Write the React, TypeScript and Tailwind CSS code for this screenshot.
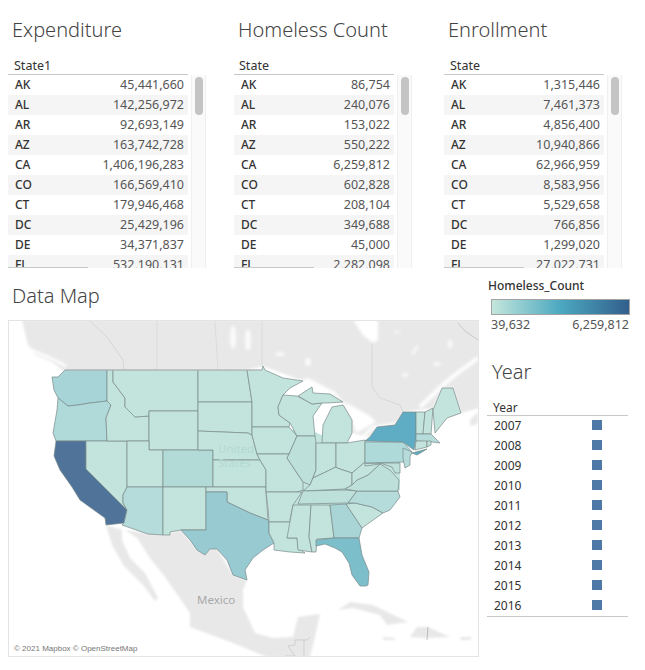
const states = ["AK","AL","AR","AZ","CA","CO","CT","DC","DE","FL"];
const expenditure = ["45,441,660","142,256,972","92,693,149","163,742,728","1,406,196,283","166,569,410","179,946,468","25,429,196","34,371,837","532,190,131"];
const homeless = ["86,754","240,076","153,022","550,222","6,259,812","602,828","208,104","349,688","45,000","2,282,098"];
const enrollment = ["1,315,446","7,461,373","4,856,400","10,940,866","62,966,959","8,583,956","5,529,658","766,856","1,299,020","27,022,731"];
const years = ["2007","2008","2009","2010","2011","2012","2013","2014","2015","2016"];

const L = "#c3e4dc";
const shapes: [string, string][] = [
  ["52,377 58,377 65,370 107,370 107,401 99,402 90,403 78,405 68,406 58,398 54,390", "#a6d4d7"],
  ["58,398 68,406 78,405 90,403 107,401 111,405 106,418 107,441 56,441 53,433 57,410", "#b0d9da"],
  ["56,441 86,441 86,469 127,510 124,523 106,525 105,518 80,500 72,487 60,470 54,456", "#4f7399"],
  ["86,441 127,441 127,487 123,495 123,503 127,510 86,469", L],
  ["107,370 113,370 113,382 125,398 125,407 135,417 149,416 149,441 107,441 106,418 111,405 107,401", L],
  ["113,370 198,370 198,411 149,411 149,416 135,417 125,407 125,398 113,382", L],
  ["149,411 198,411 198,431 198,450 149,450", L],
  ["127,441 149,441 149,450 163,450 163,487 127,487", L],
  ["163,450 213,450 213,487 163,487", "#b2dbd8"],
  ["127,487 163,487 163,535 148,534 122,525 124,523 127,510 123,503 123,495", "#b5dcda"],
  ["163,487 206,487 206,530 181,530 170,532 170,535 163,535", L],
  ["198,370 247,370 252,402 198,402", L],
  ["198,402 252,402 252,427 252,435 248,433 198,431", L],
  ["198,431 248,433 252,435 257,454 260,460 213,460 213,450 198,450", L],
  ["213,460 260,460 266,470 266,487 213,487", L],
  ["206,487 266,487 266,492 268,520 250,513 227,502 227,492 206,492", L],
  ["206,492 227,492 227,502 250,513 268,520 269,522 269,533 274,543 263,550 253,558 245,570 247,580 233,575 227,560 217,549 210,549 205,555 197,550 190,540 181,530 206,530", "#97cad1"],
  ["247,370 262,370 263,366 265,370 283,378 303,381 290,388 283,395 278,407 279,415 290,423 289,427 252,427 252,402", L],
  ["252,427 289,427 297,436 289,454 257,454 252,435", L],
  ["257,454 289,454 287,458 303,482 303,490 297,492 266,492 266,470 260,460", L],
  ["266,492 302,492 293,505 290,520 291,522 269,522 268,508", L],
  ["269,522 291,522 291,532 287,538 297,538 298,548 305,553 290,552 274,550 274,543 269,533", L],
  ["283,395 297,396 312,404 322,403 313,416 315,436 297,436 290,423 279,415 278,407", L],
  ["298,396 312,387 313,393 330,394 343,402 327,403 322,403 312,404", L],
  ["332,407 343,405 352,420 352,433 347,443 322,443 323,425", L],
  ["297,436 315,436 316,443 316,470 310,485 303,482 287,458 289,454", "#bde0da"],
  ["316,443 336,443 336,467 313,478 316,470", L],
  ["336,443 347,443 365,440 365,462 352,473 337,468 336,467", L],
  ["313,478 336,467 337,468 352,473 352,485 345,489 303,491 310,485", L],
  ["303,491 345,490 357,491 348,503 298,504", "#bde0da"],
  ["293,505 311,505 309,537 312,552 298,550 297,538 287,538", L],
  ["311,505 330,505 334,538 317,539 316,552 312,552 309,537", L],
  ["330,505 346,504 362,528 359,538 334,538", "#a9d5d7"],
  ["346,504 355,503 372,507 383,513 362,528", L],
  ["348,503 357,491 398,491 400,497 390,510 383,513 372,507 355,503", "#b5dcda"],
  ["345,489 352,485 357,480 368,475 380,464 390,470 399,480 398,491 357,491", "#bde0da"],
  ["352,473 365,462 365,466 380,464 368,475 357,480 352,485", L],
  ["365,463 400,463 400,473 395,473 392,467 380,463", "#bde0da"],
  ["365,442 403,442 412,452 405,462 365,463", "#afdada"],
  ["403,448 412,452 410,457 410,465 405,468 403,458", "#b5dcda"],
  ["365,441 370,437 377,427 395,425 403,412 416,412 416,438 414,450 403,442", "#5fadc4"],
  ["412,453 427,449 417,455", "#5fadc4"],
  ["416,412 425,412 423,434 416,434", L],
  ["425,412 433,408 431,434 423,434", L],
  ["433,410 442,388 453,388 461,413 447,418 435,433", L],
  ["416,434 431,434 435,438 440,443 432,442 416,441", "#b5dcda"],
  ["416,441 427,441 427,447 415,450", L],
  ["427,441 431,441 431,445 427,447", L],
  ["316,540 334,538 359,538 362,555 369,572 368,585 366,586 360,586 352,575 349,563 342,552 335,548 325,544 316,546", "#7dbecb"],
];

const land = [
  "22,320 479,320 479,408 461,413 453,388 442,388 433,408 403,412 395,425 377,427 370,437 352,433 343,402 303,381 263,366 247,370 65,372 52,362 36,355 28,345",
  "478,412 470,420 470,426 478,424",
  "125,530 163,535 181,530 197,550 217,549 233,575 247,580 243,590 243,607 255,633 273,638 293,637 298,617 320,614 315,637 310,657 267,657 233,643 190,627 190,613 165,577 150,558 137,538",
  "106,525 122,530 122,540 130,558 145,573 158,598 155,601 143,585 124,566 112,545",
  "338,610 350,602 373,605 408,622 387,625 380,615 353,608",
  "417,627 428,627 450,637 428,638 410,637",
  "382,637 395,638 394,640 384,640",
  "460,637 472,637 470,640 461,640",
];

const lakes: string[] = [
  "283,395 295,384 308,378 335,392 345,404 330,394 313,393 310,387 298,396",
  "313,416 322,405 334,402 330,410 323,425 322,443 316,443 314,425",
  "343,402 352,406 370,416 376,422 356,433 352,420",
  "353,320 378,320 378,340 373,343 363,335",
];

function TableBlock({ title, head, values, w, headPl }: { title: string; head: string; values: string[]; w: string; headPl: string }) {
  return (
    <div className={`shrink-0 ${w}`}>
      <h2 className="ml-[4px] h-6 text-[20px] leading-6 font-light text-[#444444]">{title}</h2>
      <div className="flex gap-[3px]">
        <div className="min-w-0 flex-1">
          <div className={`mt-[14px] h-[19px] border-b border-[#c8c8c8] text-[12.5px] leading-[20px] text-[#333333] ${headPl}`}>{head}</div>
          <div className="relative h-[193px] overflow-hidden">
            {values.map((v, i) => (
              <div key={v} className={`flex h-5 items-center justify-between pl-[7px] pr-[4px] text-[12.5px] leading-5 ${i % 2 === 1 ? "bg-[#f5f5f5]" : "bg-white"}`}>
                <span className="text-[12px] font-medium text-[#333333]">{states[i]}</span>
                <span className="text-[#555555]">{v}</span>
              </div>
            ))}
            <div className="absolute bottom-0 left-0 h-px w-20 bg-[#c8c8c8]" />
          </div>
        </div>
        <div className="mt-[33px] h-[193px] w-[15px] shrink-0 border-x border-[#efefef] bg-[#fafafa] px-[3px] pt-[2px]">
          <div className="h-[38px] w-2 rounded-[4px] bg-[#c4c4c4]" />
        </div>
      </div>
    </div>
  );
}

function MapSvg() {
  return (
    <svg viewBox="8 320 471 337" width="471" height="337" className="block">
      <defs>
        <filter id="soft"><feGaussianBlur stdDeviation="1" /></filter>
        <filter id="softer"><feGaussianBlur stdDeviation="1.6" /></filter>
      </defs>
      <g filter="url(#soft)">
        {land.map((p) => <polygon key={p} points={p} fill="#e8e8e8" />)}
      </g>
      <g fill="none" strokeWidth="0.7">
        <polyline points="90,321 107,337 123,360 124,370" stroke="#cfcfcf" />
        <polyline points="157,321 157,370" stroke="#d6d6d6" />
        <polyline points="215,321 218,370" stroke="#d6d6d6" />
        <polyline points="262,321 262,366" stroke="#d6d6d6" />
        <polyline points="372,343 372,387 380,398 400,405 403,412" stroke="#d0d0d0" />
        <polyline points="458,323 465,331 478,340" stroke="#bcbcbc" />
        <polyline points="285,656 295,656 288,646 295,645 295,640 307,640 310,637" stroke="#c4c4c4" />
        <polyline points="304,656 304,640" stroke="#c4c4c4" />
        <polyline points="428,627 427,640" stroke="#a8a8a8" />
      </g>
      <g filter="url(#softer)" fill="#ffffff">
        {lakes.map((p) => <polygon key={p} points={p} />)}
        <ellipse cx="308" cy="362" rx="3" ry="4" opacity="0.8" />
        <ellipse cx="280" cy="354" rx="5" ry="2" opacity="0.7" />
        <ellipse cx="248" cy="340" rx="3" ry="11" opacity="0.8" />
        <ellipse cx="233" cy="337" rx="3" ry="12" opacity="0.8" />
        <ellipse cx="405" cy="375" rx="3" ry="2" opacity="0.7" />
        <ellipse cx="415" cy="350" rx="1.5" ry="6" opacity="0.7" transform="rotate(30 415 350)" />
        <ellipse cx="397" cy="332" rx="3" ry="1.5" opacity="0.6" />
        <ellipse cx="437" cy="364" rx="4" ry="2" opacity="0.7" />
        <ellipse cx="450" cy="344" rx="2.5" ry="4" opacity="0.7" />
        <polyline points="348,444 362,438 372,428 395,424" fill="none" stroke="#ffffff" strokeWidth="3" />
        <polyline points="420,407 443,385 455,375 478,358" fill="none" stroke="#ffffff" strokeWidth="4" />
        <polyline points="30,350 50,358 66,366" fill="none" stroke="#ffffff" strokeWidth="3" />
      </g>
      <polygon points="262,430 310,430 345,445 400,445 400,490 360,500 300,540 270,520" fill={L} />
      <g strokeLinejoin="round">
        {shapes.map(([p, c]) => <polygon key={p} points={p} fill={c} stroke="#7a8a8a" strokeWidth="0.7" />)}
      </g>
      <polyline points="65,370 262,370" fill="none" stroke="#bdbdbd" strokeWidth="0.7" />
      <g fontFamily="'Noto Sans', sans-serif" fontSize="11.5" fill="#b4d9d0">
        <text x="218" y="453">United</text>
        <text x="218" y="467">States</text>
      </g>
      <text x="197" y="604" fontFamily="'Noto Sans', sans-serif" fontSize="11.5" fill="#a8a8a8">Mexico</text>
    </svg>
  );
}

export default function App() {
  return (
    <div className="h-[670px] w-[645px] overflow-hidden bg-white font-['Noto_Sans',sans-serif]">
      <div className="flex h-[268px] overflow-hidden pl-2 pt-[18px]">
        <TableBlock title="Expenditure" head="State1" headPl="pl-[6px]" values={expenditure} w="w-[198px] mr-[28px]" />
        <TableBlock title="Homeless Count" head="State" headPl="pl-[5px]" values={homeless} w="w-[178px] mr-[32px]" />
        <TableBlock title="Enrollment" head="State" headPl="pl-[6px]" values={enrollment} w="w-[178px]" />
      </div>
      <div className="flex pl-2">
        <div className="w-[471px] shrink-0">
          <h2 className="ml-[4px] mt-[16px] h-6 text-[20px] leading-6 font-light text-[#444444]">Data Map</h2>
          <div className="relative mt-3 h-[337px] w-[471px] outline outline-1 -outline-offset-1 outline-[#e4e4e4]">
            <MapSvg />
            <div className="absolute bottom-[3px] left-[3px] bg-white/70 px-[3px] font-['Liberation_Sans',sans-serif] text-[8px] leading-[11px] text-[#777777]">© 2021 Mapbox © OpenStreetMap</div>
          </div>
        </div>
        <div className="ml-2 w-[143px] shrink-0">
          <div className="ml-[1px] mt-[10px] h-4 text-[12px] leading-4 font-medium text-[#333333]">Homeless_Count</div>
          <div className="ml-1 mt-[5px] h-[16px] w-[139px] border border-[#a3a3a3] bg-[linear-gradient(90deg,#c4e6dc_0%,#4ba8c0_50%,#325f8c_100%)]" />
          <div className="ml-1 mt-[1px] flex w-[139px] justify-between text-[12.5px] leading-[17px] text-[#555555]"><span>39,632</span><span className="mr-[1px]">6,259,812</span></div>
          <h2 className="ml-[5px] mt-[25px] h-7 text-[20px] leading-7 font-light text-[#444444]">Year</h2>
          <div className="mt-[15px] w-[141px] border-b border-[#c8c8c8]">
            <div className="h-[15px] border-b border-[#c8c8c8] pl-[6px] text-[12px] leading-[14px] text-[#333333]">Year</div>
            {years.map((y) => (
              <div key={y} className="flex h-5 items-center pl-[7px] text-[12px] text-[#333333]">
                <span className="w-[98px]">{y}</span>
                <span className="mb-[2px] h-[10px] w-[10px] bg-[#4e79a7]" />
              </div>
            ))}
          </div>
        </div>
      </div>
    </div>
  );
}
